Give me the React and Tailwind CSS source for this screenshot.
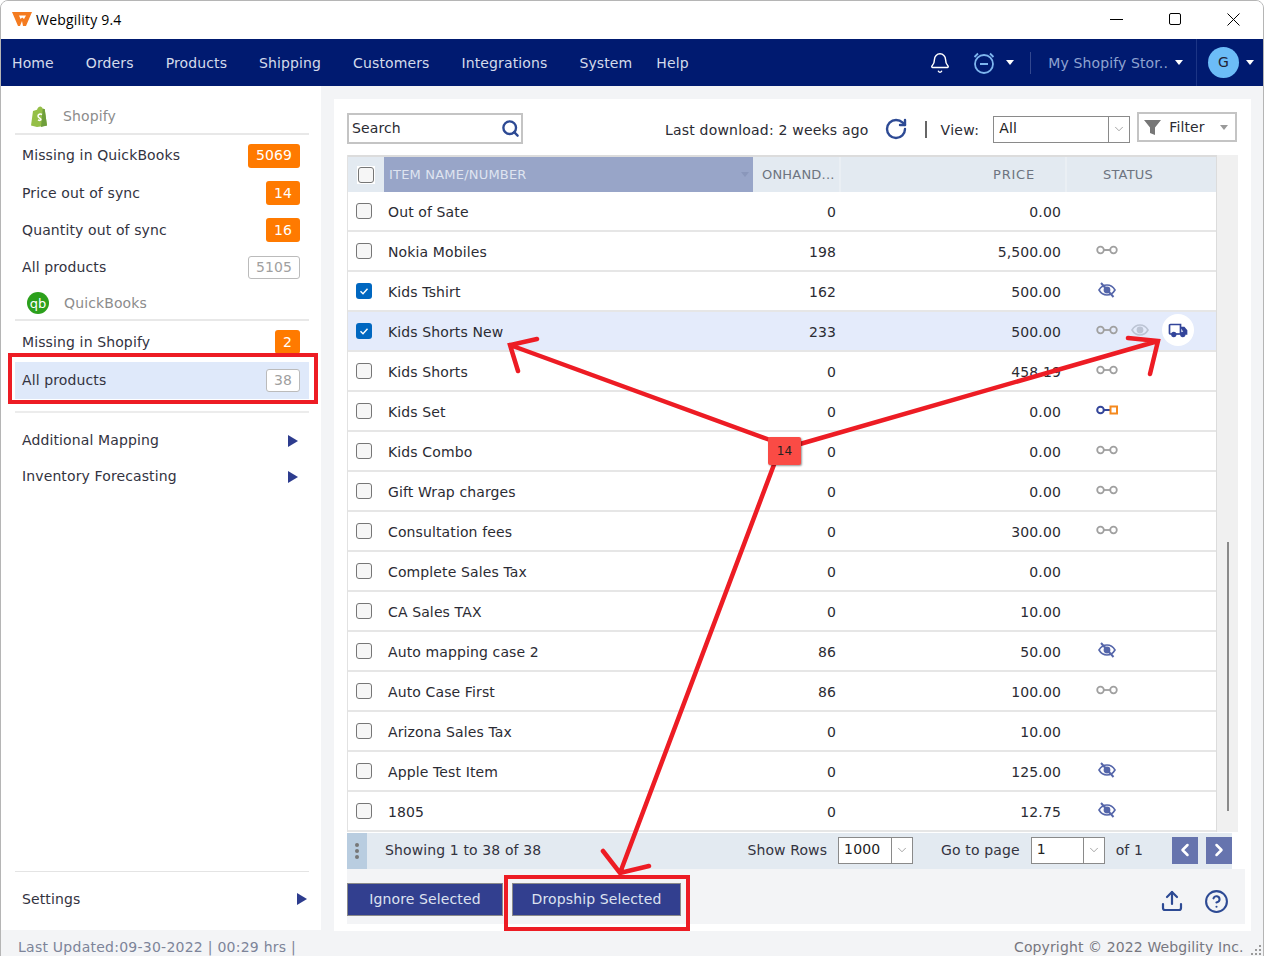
import React from "react";
import { ChevronDown, ChevronLeft, ChevronRight, Upload, CircleHelp, Bell, RotateCw, Search } from "lucide-react";

const mono = { fontFamily: '"DejaVu Sans", sans-serif' };

// Table data
const rows = [
  { name: "Out of Sate", qty: "0", price: "0.00" },
  { name: "Nokia Mobiles", qty: "198", price: "5,500.00", status: "link" },
  { name: "Kids Tshirt", qty: "162", price: "500.00", status: "hidden", checked: true },
  { name: "Kids Shorts New", qty: "233", price: "500.00", status: "link", checked: true, active: true },
  { name: "Kids Shorts", qty: "0", price: "458.19", status: "link" },
  { name: "Kids Set", qty: "0", price: "0.00", status: "partial" },
  { name: "Kids Combo", qty: "0", price: "0.00", status: "link" },
  { name: "Gift Wrap charges", qty: "0", price: "0.00", status: "link" },
  { name: "Consultation fees", qty: "0", price: "300.00", status: "link" },
  { name: "Complete Sales Tax", qty: "0", price: "0.00" },
  { name: "CA Sales TAX", qty: "0", price: "10.00" },
  { name: "Auto mapping case 2", qty: "86", price: "50.00", status: "hidden" },
  { name: "Auto Case First", qty: "86", price: "100.00", status: "link" },
  { name: "Arizona Sales Tax", qty: "0", price: "10.00" },
  { name: "Apple Test Item", qty: "0", price: "125.00", status: "hidden" },
  { name: "1805", qty: "0", price: "12.75", status: "hidden" },
];

const navItems = ["Home", "Orders", "Products", "Shipping", "Customers", "Integrations", "System"];

const Caret = ({ className = "" }) => (
  <span className={`inline-block w-0 h-0 border-x-[4px] border-x-transparent border-t-[5px] ${className}`} />
);

const TriangleRight = () => (
  <span className="inline-block w-0 h-0 border-y-[6px] border-y-transparent border-l-[10px] border-l-[#2d3c8e]" />
);

const LinkIcon = () => (
  <svg width="22" height="10" viewBox="0 0 22 10" fill="none" stroke="#a0a0a0" strokeWidth="1.8">
    <circle cx="4.5" cy="5" r="3.3" />
    <path d="M8 5h6" />
    <circle cx="17.5" cy="5" r="3.3" />
  </svg>
);

const PartialIcon = () => (
  <svg width="22" height="10" viewBox="0 0 22 10" fill="none" strokeWidth="2">
    <circle cx="4.5" cy="5" r="3.3" stroke="#33459a" />
    <path d="M8 5h6" stroke="#33459a" />
    <rect x="14.5" y="1.5" width="6.5" height="7" stroke="#f58a1f" />
  </svg>
);

const EyeIcon = ({ color = "#5566aa", slash = false }) => (
  <svg width="18" height="16" viewBox="0 0 18 16" fill="none" stroke={color} strokeWidth="1.6">
    <path d="M1 8c2-3.4 4.8-5 8-5s6 1.6 8 5c-2 3.4-4.8 5-8 5s-6-1.6-8-5z" />
    <circle cx="9" cy="8" r="2.6" fill={color} />
    {slash && <path d="M3 1l12.5 14" strokeWidth="2" />}
  </svg>
);

const TruckIcon = () => (
  <svg width="20" height="16" viewBox="0 0 20 16" fill="none" stroke="#33459a" strokeWidth="1.7">
    <path d="M4 12H2.5a1 1 0 0 1-1-1V3.5a1 1 0 0 1 1-1h10V12" />
    <path d="M12.5 5.5h3.5l2.5 3V12h-2" fill="#33459a" />
    <path d="M8 12h5" />
    <circle cx="5.8" cy="12.5" r="1.8" fill="#33459a" />
    <circle cx="14.8" cy="12.5" r="1.8" fill="#33459a" />
  </svg>
);

const Check = ({ checked }) =>
  checked ? (
    <span className="flex items-center justify-center w-4 h-4 rounded-[3px] bg-[#0067c0]">
      <svg width="12" height="12" viewBox="0 0 12 12" fill="none" stroke="white" strokeWidth="1.4">
        <path d="M2.5 6.2l2.5 2.5 4.5-5" />
      </svg>
    </span>
  ) : (
    <span className="block w-4 h-4 rounded-[3px] border border-[#767676] bg-[#f6f6f6]" />
  );

const SideItem = ({ label, count, outline, active, className = "" }) => (
  <div className={`flex items-center justify-between pl-[7px] pr-[9px] ${active ? "bg-[#dfe9fa] h-[37px]" : "h-[37.4px]"} ${className}`}>
    <span className="text-[#33333f]">{label}</span>
    <span
      className={`flex items-center justify-center h-6 rounded-[3px] ${
        outline ? "border border-[#bbb] text-[#a0a0a0] bg-white h-[23px]" : "bg-[#ff7a00] text-white"
      } ${String(count).length > 2 ? "w-[52px]" : String(count).length > 1 ? "w-[34px]" : "w-[25px]"}`}
    >
      {count}
    </span>
  </div>
);

const SideLink = ({ label, className = "" }) => (
  <div className={`flex items-center justify-between text-[#33333f] ${className}`}>
    <span>{label}</span>
    <TriangleRight />
  </div>
);

const Combo = ({ value, w, arrow = "w-[21px]", className = "" }) => (
  <div className={`flex h-[27px] bg-white border border-[#8a8a8a] ${w} ${className}`}>
    <span className="flex-1 pl-[5px] leading-[22px] text-[#222]">{value}</span>
    <span className={`flex items-center justify-center border-l border-[#8a8a8a] ${arrow}`}>
      <ChevronDown size={14} strokeWidth={1} color="#666" />
    </span>
  </div>
);

const Row = ({ row }) => (
  <div className={`flex items-center h-10 pt-[2px] border-b-2 border-[#e6e6e6] text-[#2b2b33] ${row.active ? "bg-[#e4ebfb]" : "bg-white"}`}>
    <div className="w-[40px] pl-[8px] -mt-[3px]">
      <Check checked={row.checked} />
    </div>
    <div className="w-[365px]">{row.name}</div>
    <div className="w-[83px] text-right">{row.qty}</div>
    <div className="w-[225px] text-right">{row.price}</div>
    <div className="flex items-center flex-1 pl-[35px] -mt-[4px] gap-[13px]">
      {row.status === "link" && <LinkIcon />}
      {row.status === "partial" && <PartialIcon />}
      {row.status === "hidden" && <span className="pl-[2px]"><EyeIcon slash /></span>}
      {row.active && <EyeIcon color="#bcc4d4" />}
      {row.active && (
        <span className="flex items-center justify-center w-8 h-8 rounded-full bg-white">
          <TruckIcon />
        </span>
      )}
    </div>
  </div>
);

export default function App() {
  return (
    <div className="relative w-[1272px] h-[956px] overflow-hidden bg-white text-[14px] tracking-[0.12px]" style={mono}>
      <div className="flex flex-col h-[970px] border border-[#b5b5b5] rounded-t-lg overflow-hidden bg-[#f3f4f6] w-[1264px]">
        {/* Title bar */}
        <div className="flex items-center h-[38px] bg-white pl-[11px] pb-[2px] shrink-0">
          <svg width="20" height="14" viewBox="0 0 20 14">
            <path d="M0 0h20l-6 14h-3L10 9l-2 5H6z" fill="#f47b20" />
            <path d="M7 3.5h7l-2 3.5-1.8-1.5L8.5 7z" fill="white" />
          </svg>
          <span className="ml-[4px] text-black text-[14px] tracking-[0.2px]" style={{ fontFamily: '"Open Sans", sans-serif' }}>
            Webgility 9.4
          </span>
          <div className="ml-auto flex items-center">
            <span className="block w-[13px] h-px bg-black mr-[46px]" />
            <span className="block w-[12px] h-[12px] border border-black rounded-[2px] mr-[46px]" />
            <svg width="13" height="13" viewBox="0 0 13 13" stroke="black" strokeWidth="1" className="mr-[23px]">
              <path d="M.5.5l12 12M12.5.5l-12 12" />
            </svg>
          </div>
        </div>

        {/* Nav */}
        <div className="flex items-center h-[47px] bg-[#001a70] text-[#d4dbeb] pl-[11px] shrink-0">
          <div className="flex gap-8 pt-[2px]">
            {navItems.map((item) => (
              <span key={item}>{item}</span>
            ))}
          </div>
          <span className="ml-6 pt-[2px]">Help</span>
          <div className="ml-auto flex items-center h-full">
            <Bell size={22} color="white" strokeWidth={1.6} />
            <svg width="24" height="24" viewBox="0 0 24 24" fill="none" stroke="#7db5ee" strokeWidth="1.8" className="ml-[21px]">
              <circle cx="12" cy="13" r="9" />
              <path d="M8 13h8M2.5 6L6 2.5M21.5 6L18 2.5" />
            </svg>
            <Caret className="ml-[10px] border-t-white" />
            <span className="w-px h-[22px] bg-[#33488f] ml-[16px]" />
            <span className="ml-[17px] text-[#8fa3d0] pt-[2px]">My Shopify Stor..</span>
            <Caret className="ml-[7px] border-t-white" />
            <span className="w-px h-full bg-[#1c3585] ml-[13px]" />
            <span className="flex items-center justify-center ml-[11px] w-[31px] h-[31px] rounded-full bg-[#6cbcf7] text-[#223]">G</span>
            <Caret className="ml-[7px] mr-[9px] border-t-white" />
          </div>
        </div>

        {/* Body */}
        <div className="flex flex-1 min-h-0">
          {/* Sidebar */}
          <div className="flex flex-col w-[320px] h-[844px] bg-white pl-[14px] pr-[12px] pt-[17px] shrink-0">
            <div className="flex items-center h-[27px] border-b-2 border-[#e8e8e8] pb-[3px] box-content text-[#8c8c8c]">
              <svg width="18" height="21" viewBox="0 0 18 21" className="ml-[16px]">
                <path d="M2 5l4-1.2C6.8 1.6 8 .5 9.3.5c1.2 0 2 1 2.4 2.2l2 .3 2.3 16.5L6 21 0 19.5z" fill="#95bf47" />
                <path d="M11.7 2.7L13.7 3l2.3 16.5L10 21z" fill="#6f9e3c" />
                <path d="M11 8.5c-2-1-4 0-4 1.5 0 2 3 2 3 3.5 0 1-1.5 1.2-3 .3" fill="none" stroke="white" strokeWidth="1.5" />
              </svg>
              <span className="ml-[14px]">Shopify</span>
            </div>
            <SideItem label="Missing in QuickBooks" count="5069" className="mt-[2px]" />
            <SideItem label="Price out of sync" count="14" />
            <SideItem label="Quantity out of sync" count="16" />
            <SideItem label="All products" count="5105" outline />
            <div className="flex items-center h-[27px] border-b-2 border-[#e8e8e8] pb-[2px] box-content text-[#8c8c8c] mt-[3px]">
              <span className="flex items-center justify-center ml-[12px] w-[22px] h-[22px] rounded-full bg-[#2ca01c] text-white text-[13px] leading-none">
                qb
              </span>
              <span className="ml-[15px]">QuickBooks</span>
            </div>
            <SideItem label="Missing in Shopify" count="2" className="mt-[3px]" />
            <SideItem label="All products" count="38" outline active className="mt-[1px]" />
            <div className="border-b-2 border-[#ececec] mt-[12px]" />
            <SideLink label="Additional Mapping" className="mt-[18px] pl-[7px] pr-[11px] h-5" />
            <SideLink label="Inventory Forecasting" className="mt-[16px] pl-[7px] pr-[11px] h-5" />
            <div className="mt-auto mb-[21px] border-t border-[#e4e4e4] pt-[17px]">
              <SideLink label="Settings" className="pl-[7px] pr-[2px] h-5" />
            </div>
          </div>

          {/* Main panel */}
          <div className="flex flex-col w-[917px] h-[832px] ml-[13px] mt-[13px] bg-white pl-[13px] pr-[5px]">
            {/* Toolbar */}
            <div className="flex items-center h-[56px] shrink-0 pt-[2px] text-[#2b2b33]">
              <div className="flex items-center justify-between w-[176px] h-[31px] border-2 border-[#c4c4c4] pl-[3px] pr-[1px]">
                <span>Search</span>
                <Search size={19} strokeWidth={3} color="#2d4a94" />
              </div>
              <span className="ml-[142px] mt-[4px] tracking-[0.2px]">Last download: 2 weeks ago</span>
              <RotateCw size={24} strokeWidth={2.4} color="#2d4a94" className="ml-[15px] mt-[2px]" />
              <span className="w-[2px] h-[17px] bg-[#666] ml-[17px] mt-[2px]" />
              <span className="ml-[14px] mt-[4px] tracking-[0.3px]">View:</span>
              <Combo value="All" w="w-[137px]" className="ml-[14px] mt-[2px]" />
              <div className="flex items-center w-[100px] h-[30px] ml-[7px] border-2 border-[#c4c4c4] pl-[5px] -mt-[2px]">
                <svg width="17" height="17" viewBox="0 0 17 17" fill="#777">
                  <path d="M0 1h17l-6 7.5V16l-5-2V8.5z" />
                </svg>
                <span className="ml-[8px]">Filter</span>
                <Caret className="ml-[15px] border-t-[#999]" />
              </div>
            </div>

            {/* Grid */}
            <div className="flex w-[891px] shrink-0">
              <div className="w-[869px] border-l border-[#e2e2e2]">
                <div className="flex h-[37px] bg-[#e3eaf1] text-[13px] tracking-[0.2px] text-[#6d7480] border-t-2 border-[#dcdcdc]">
                  <div className="flex items-center w-[36px] pl-[9px]">
                    <span className="p-[1px] bg-white"><Check /></span>
                  </div>
                  <div className="flex items-center justify-between w-[369px] pl-[5px] pr-[4px] bg-[#98a5c8] text-[#dfe4f0]">
                    <span>ITEM NAME/NUMBER</span>
                    <Caret className="border-t-[#8a97bb]" />
                  </div>
                  <div className="flex items-center w-[88px] pl-[9px] border-r-2 border-[#eaeff4]">ONHAND...</div>
                  <div className="flex items-center justify-end w-[226px] pr-[30px] border-r-2 border-[#eaeff4] tracking-[0.8px]">PRICE</div>
                  <div className="flex items-center flex-1 pl-[36px]">STATUS</div>
                </div>
                {rows.map((row) => (
                  <Row key={row.name} row={row} />
                ))}
              </div>
              <div className="relative flex-1 bg-[#f0f0f0] border-l border-[#dcdcdc]">
                <span className="absolute left-[10px] top-[387px] w-[2px] h-[269px] bg-[#8a8a8a]" />
              </div>
            </div>

            {/* Pager */}
            <div className="flex items-center h-[36px] mt-[1px] pb-[2px] w-[885px] bg-[#e3eaf1] text-[#33333f] shrink-0">
              <div className="flex flex-col items-center justify-center gap-[2px] w-[20px] self-stretch -mb-[2px] bg-[#b9cde0]">
                <span className="w-1 h-1 rounded-full bg-[#777]" />
                <span className="w-1 h-1 rounded-full bg-[#777]" />
                <span className="w-1 h-1 rounded-full bg-[#777]" />
              </div>
              <span className="ml-[18px]">Showing 1 to 38 of 38</span>
              <span className="ml-auto">Show Rows</span>
              <Combo value="1000" w="w-[75px]" className="ml-[11px]" />
              <span className="ml-[28px]">Go to page</span>
              <Combo value="1" w="w-[74px]" className="ml-[11px]" />
              <span className="ml-[11px]">of 1</span>
              <span className="flex items-center justify-center w-[26px] h-[27px] ml-[29px] bg-[#6674ae]">
                <ChevronLeft size={20} strokeWidth={3} color="white" />
              </span>
              <span className="flex items-center justify-center w-[26px] h-[27px] ml-[8px] bg-[#6674ae]">
                <ChevronRight size={20} strokeWidth={3} color="white" />
              </span>
            </div>

            {/* Actions */}
            <div className="flex items-start h-[55px] pt-[14px] w-[898px] bg-[#f3f4f6] shrink-0">
              <button className="w-[156px] h-[33px] bg-[#323f8f] border border-[#8a8a8a] text-[#dde2f0]" style={mono}>
                Ignore Selected
              </button>
              <button className="w-[169px] h-[33px] ml-[9px] bg-[#323f8f] border border-[#8a8a8a] text-[#dde2f0]" style={mono}>
                Dropship Selected
              </button>
              <Upload size={24} strokeWidth={2.2} color="#2d4a94" className="ml-auto mt-[6px]" />
              <CircleHelp size={25} strokeWidth={2} color="#2d4a94" className="ml-[20px] mr-[16px] mt-[6px]" />
            </div>
          </div>
        </div>
      </div>

      {/* Status strip */}
      <div className="absolute left-[18px] top-[938px] text-[#7d8499] text-[14px] leading-[18px] tracking-[0.25px]">
        Last Updated:09-30-2022 | 00:29 hrs |
      </div>
      <div className="absolute left-[1014px] top-[938px] text-[#77777f] text-[14px] leading-[18px]">
        Copyright © 2022 Webgility Inc.
      </div>
      <svg className="absolute left-[1249px] top-[944px]" width="14" height="12" viewBox="0 0 14 12" fill="#9a9a9a">
        <rect x="10" y="1" width="2" height="2" />
        <rect x="6" y="5" width="2" height="2" />
        <rect x="10" y="5" width="2" height="2" />
        <rect x="2" y="9" width="2" height="2" />
        <rect x="6" y="9" width="2" height="2" />
        <rect x="10" y="9" width="2" height="2" />
      </svg>

      {/* Red annotations over the screenshot */}
      <svg className="absolute inset-0 pointer-events-none" width="1272" height="956" fill="none" stroke="#ed1c24" strokeLinecap="round">
        <rect x="10" y="355" width="306" height="47" strokeWidth="4" strokeLinecap="butt" />
        <rect x="506" y="877" width="182" height="52" strokeWidth="4" strokeLinecap="butt" />
        <g strokeWidth="4.5">
          <path d="M770 440L510 345M537 339L510 345L518 371" />
          <path d="M800 444L1158 341M1128 338L1158 341L1150 374" />
          <path d="M775 462L620 873M603 851L620 873L649 866" />
        </g>
      </svg>
      <span className="absolute left-[768px] top-[437px] flex items-center justify-center w-[33px] h-[28px] rounded-[2px] bg-[#fa4b45] text-[12px] text-[#222] shadow-[1px_1px_2px_rgba(0,0,0,0.4)]">
        14
      </span>
    </div>
  );
}
